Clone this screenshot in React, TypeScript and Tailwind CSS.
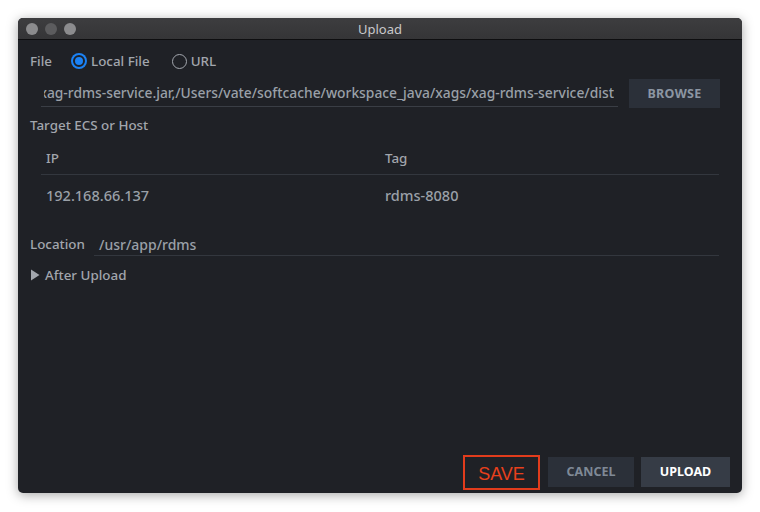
import React from 'react'

const font = { fontFamily: '"Noto Sans", "DejaVu Sans", sans-serif' }

function TrafficLights() {
  return (
    <div className="flex items-center gap-[7px] pl-[8px]">
      <span className="h-[12px] w-[12px] rounded-full bg-[#8c8c8e]" />
      <span className="h-[12px] w-[12px] rounded-full bg-[#5c5c5e]" />
      <span className="h-[12px] w-[12px] rounded-full bg-[#8c8c8e]" />
    </div>
  )
}

function Radio({ checked, label }: { checked: boolean; label: string }) {
  return (
    <label className="flex items-center gap-[4px]">
      {checked ? (
        <span className="flex h-[16px] w-[16px] items-center justify-center rounded-full bg-[#1b82f5]">
          <span className="h-[12px] w-[12px] rounded-full border-[2px] border-[#1f2126] bg-[#1b82f5]" />
        </span>
      ) : (
        <span className="h-[15px] w-[15px] rounded-full border border-[#a3a7ae]" />
      )}
      <span>{label}</span>
    </label>
  )
}

export default function App() {
  return (
    <div className="h-[512px] w-[760px] bg-white pl-[18px] pt-[18px]" style={font}>
      <div className="flex h-[475px] w-[724px] flex-col overflow-hidden rounded-[5px] bg-[#1f2126] shadow-[0_2px_12px_rgba(0,0,0,0.35)]">
        <div className="relative flex h-[22px] shrink-0 items-center border-b border-[#0e0e10] bg-gradient-to-b from-[#3d3d3f] to-[#353537]">
          <TrafficLights />
          <div className="absolute inset-0 flex items-center justify-center pt-[2px] text-[13px] text-[#c9c9cb]">Upload</div>
        </div>

        <div className="flex flex-1 flex-col px-[12px] text-[13.4px] font-medium text-[#a2a6ad]">
          <div className="mt-[11px] flex h-[20px] items-center">
            <span className="w-[41px]">File</span>
            <div className="flex items-center gap-[22px]">
              <Radio checked label="Local File" />
              <Radio checked={false} label="URL" />
            </div>
          </div>

          <div className="mt-[8px] flex h-[29px] items-center">
            <div className="ml-[11px] flex h-[27px] w-[577px] border-b border-[#3a3e45] pl-[3px] pr-[4px] pt-[3px]">
              <div className="flex min-w-0 flex-1 justify-end overflow-hidden whitespace-nowrap text-[13.83px] text-[#9aa0a8]">
                <span>xag-rdms-service.jar,/Users/vate/softcache/workspace_java/xags/xag-rdms-service/dist</span>
              </div>
            </div>
            <button className="ml-[11px] h-[29px] w-[91px] bg-[#2b3039] pt-[2px] text-[12.5px] font-bold tracking-wide text-[#8c96a3]">
              BROWSE
            </button>
          </div>

          <div className="mt-[8px] flex h-[18px] items-center">Target ECS or Host</div>

          <div className="ml-[11px] mr-[11px] mt-[11px]">
            <div className="flex h-[30px] items-center border-b border-[#33373e] pb-[3px] text-[#a2a6ad]">
              <span className="w-[344px] pl-[5px]">IP</span>
              <span>Tag</span>
            </div>
            <div className="flex h-[38px] items-center pt-[3px] text-[14.5px] text-[#9aa0a8]">
              <span className="w-[344px] pl-[5px]">192.168.66.137</span>
              <span>rdms-8080</span>
            </div>
          </div>

          <div className="mt-[19px] flex h-[24px] items-center">
            <span className="w-[64px]">Location</span>
            <div className="mr-[11px] flex h-[24px] flex-1 items-center border-b border-[#33373e] pl-[5px] pt-[1px] text-[14px] text-[#9aa0a8]">
              /usr/app/rdms
            </div>
          </div>

          <div className="mt-[9px] flex h-[20px] items-center gap-[5px]">
            <svg width="10" height="12" viewBox="0 0 10 12">
              <path d="M1 0.5 L9.5 6 L1 11.5 Z" fill="#a2a6ad" />
            </svg>
            <span>After Upload</span>
          </div>

          <div className="mt-auto mb-[3px] flex items-end justify-end">
            <div className="mr-[8px] flex h-[35px] w-[77px] items-center justify-center border-[2px] border-[#e23c1c] pt-[3px] text-[18px] font-normal text-[#e8401c]" style={{ fontFamily: '"Liberation Sans", Arial, sans-serif' }}>
              SAVE
            </div>
            <button className="mb-[3px] mr-[7px] h-[30px] w-[86px] bg-[#2b3039] text-[12.5px] font-bold text-[#7f8996]">CANCEL</button>
            <button className="mb-[3px] h-[30px] w-[89px] bg-[#363c46] text-[12.5px] font-bold text-white">UPLOAD</button>
          </div>
        </div>
      </div>
    </div>
  )
}
